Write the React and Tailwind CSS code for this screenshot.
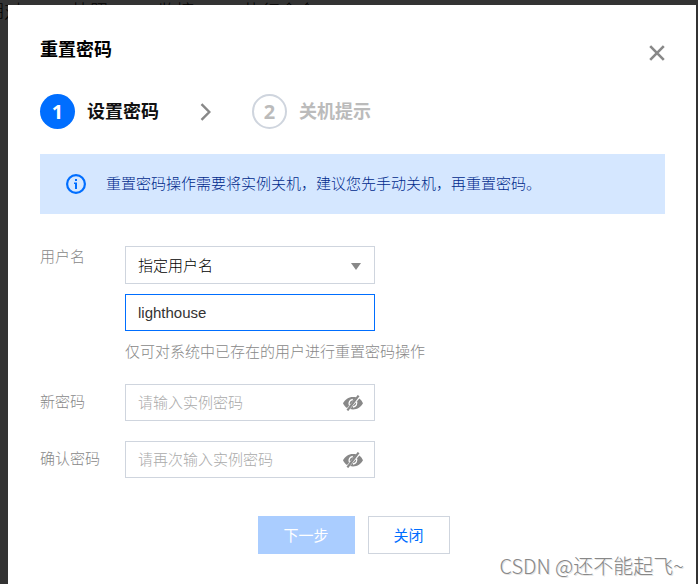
import { useState } from 'react';

const backgroundTabs = ['密钥对', '快照', '监控', '执行命令'];

function CloseIcon() {
  return (
    <svg width="16" height="16" viewBox="0 0 16 16" fill="none" stroke="#888888" strokeWidth="2.6">
      <path d="M1.2 1.2l13.6 13.6M14.8 1.2L1.2 14.8" />
    </svg>
  );
}

function InfoIcon() {
  return (
    <svg width="20" height="20" viewBox="0 0 20 20" fill="none" className="shrink-0">
      <circle cx="10" cy="10" r="8.9" stroke="#006eff" strokeWidth="2.2" />
      <path d="M9 5h2v2H9zM8 8.500h3V15H9v-5H8z" fill="#006eff" />
    </svg>
  );
}

function EyeOffIcon() {
  return (
    <svg width="20" height="16" viewBox="0 0 20 16" fill="none">
      <path d="M10 2C5.400 2 2 4.600 0 8.200 1 10.400 2.400 12 4 13L13.400 2.400C12.300 2.100 11.200 2 10 2z" fill="#888888" />
      <path d="M16.400 3.400L7 14c1 .3 2 .4 3 .4 4.600 0 8-2.600 10-6.200-.9-2-2.100-3.600-3.600-4.800z" fill="#888888" />
      <path d="M6.400 10.200C5.300 7.500 7 4.800 9.800 4.500M13.500 6.500c1 2.600-.7 5.200-3.500 5.500" stroke="#ffffff" strokeWidth="1.300" />
      <path d="M15.600 .6L4.400 15.400" stroke="#888888" strokeWidth="2.200" />
    </svg>
  );
}

function PasswordField({ id, label, placeholder }) {
  const [value, setValue] = useState('');
  const [visible, setVisible] = useState(false);

  return (
    <div className="flex items-start">
      <label htmlFor={id} className="w-[85px] shrink-0 pt-2 leading-5 text-[#888888]">
        {label}
      </label>
      <div className="flex h-[37px] w-[250px] items-center border border-[#cfd5de] pr-[11px] pl-3">
        <input
          id={id}
          type={visible ? 'text' : 'password'}
          value={value}
          onChange={(e) => setValue(e.target.value)}
          placeholder={placeholder}
          className="min-w-0 flex-1 pt-0.5 text-black outline-none placeholder:text-[#aaaaaa]"
        />
        <button type="button" aria-label="显示密码" onClick={() => setVisible(!visible)}>
          <EyeOffIcon />
        </button>
      </div>
    </div>
  );
}

export default function App() {
  const [username, setUsername] = useState('lighthouse');

  return (
    <div className="relative min-h-screen overflow-hidden bg-[#333333] pt-[5px] pr-0.5 pl-2 font-['Liberation_Sans','Noto_Sans_CJK_SC',sans-serif] text-[15px] font-light">
      {/* Page tabs behind the dialog */}
      <div className="absolute top-0 -left-8 flex gap-[50px] text-[18px] leading-6 whitespace-nowrap text-black">
        {backgroundTabs.map((tab) => (
          <span key={tab}>{tab}</span>
        ))}
      </div>

      <div role="dialog" aria-labelledby="dialog-title" className="relative bg-white pt-8 pr-[31px] pb-[30px] pl-8">
        {/* Header */}
        <div className="flex items-start justify-between">
          <h1 id="dialog-title" className="pt-px text-lg leading-6 font-bold text-black">重置密码</h1>
          <button type="button" aria-label="关闭对话框" className="mt-2">
            <CloseIcon />
          </button>
        </div>

        {/* Steps */}
        <ol className="mt-8 flex h-[35px] items-center text-lg font-bold">
          <li className="flex items-center gap-3 text-[#111111]">
            <span className="flex size-[35px] items-center justify-center rounded-full bg-[#006eff] font-['Open_Sans',sans-serif] text-xl text-white">
              1
            </span>
            设置密码
          </li>
          <li aria-hidden="true" className="mr-10 ml-[41px]">
            <svg width="12" height="18" viewBox="0 0 12 18" fill="none" stroke="#888888" strokeWidth="2.4">
              <path d="M1.500 1.200L9.300 9l-7.800 7.800" />
            </svg>
          </li>
          <li className="flex items-center gap-3 text-[#bbbbbb]">
            <span className="flex size-[35px] items-center justify-center rounded-full border-2 border-[#cfd5de] font-['Open_Sans',sans-serif] text-xl">
              2
            </span>
            关机提示
          </li>
        </ol>

        {/* Notice */}
        <div className="mt-[25px] flex h-[60px] items-center gap-5 bg-[#d5e7ff] px-[26px] text-[#002a8c]">
          <InfoIcon />
          <p>重置密码操作需要将实例关机，建议您先手动关机，再重置密码。</p>
        </div>

        {/* Form */}
        <form className="mt-8" onSubmit={(e) => e.preventDefault()}>
          <div className="flex items-start">
            <label htmlFor="user-type" className="w-[85px] shrink-0 pt-px leading-5 text-[#888888]">
              用户名
            </label>
            <div>
              <div className="relative w-[250px]">
                <select
                  id="user-type"
                  className="h-[38px] w-full appearance-none border border-[#cfd5de] bg-white px-3 pt-0.5 text-black outline-none"
                >
                  <option>指定用户名</option>
                </select>
                <svg className="pointer-events-none absolute top-[17px] right-3.5" width="10" height="7" viewBox="0 0 10 7">
                  <path d="M0 0h10L5 7z" fill="#888888" />
                </svg>
              </div>
              <input
                type="text"
                aria-label="指定用户名"
                value={username}
                onChange={(e) => setUsername(e.target.value)}
                className="mt-2.5 block h-[37px] w-[250px] border border-[#006eff] px-3 text-[#333333] outline-none"
              />
              <p className="mt-[11px] leading-5 text-[#888888]">仅可对系统中已存在的用户进行重置密码操作</p>
            </div>
          </div>

          <div className="mt-[22px] space-y-5">
            <PasswordField id="new-password" label="新密码" placeholder="请输入实例密码" />
            <PasswordField id="confirm-password" label="确认密码" placeholder="请再次输入实例密码" />
          </div>

          {/* Actions */}
          <div className="mt-[38px] flex justify-center gap-[13px] pl-0.5">
            <button type="submit" disabled className="h-[38px] w-[97px] bg-[#aacdff] pt-0.5 font-normal text-white">
              下一步
            </button>
            <button type="button" className="h-[38px] w-[82px] border border-[#cfd5de] bg-white pt-0.5 font-normal text-[#006eff]">
              关闭
            </button>
          </div>
        </form>

        {/* Watermark */}
        <span className="absolute right-3 bottom-1 font-['Noto_Sans_CJK_SC',sans-serif] text-xl leading-7 whitespace-nowrap text-[#888888] [text-shadow:1px_1px_0_#e4e4e4]">
          CSDN @还不能起飞~
        </span>
      </div>
    </div>
  );
}
